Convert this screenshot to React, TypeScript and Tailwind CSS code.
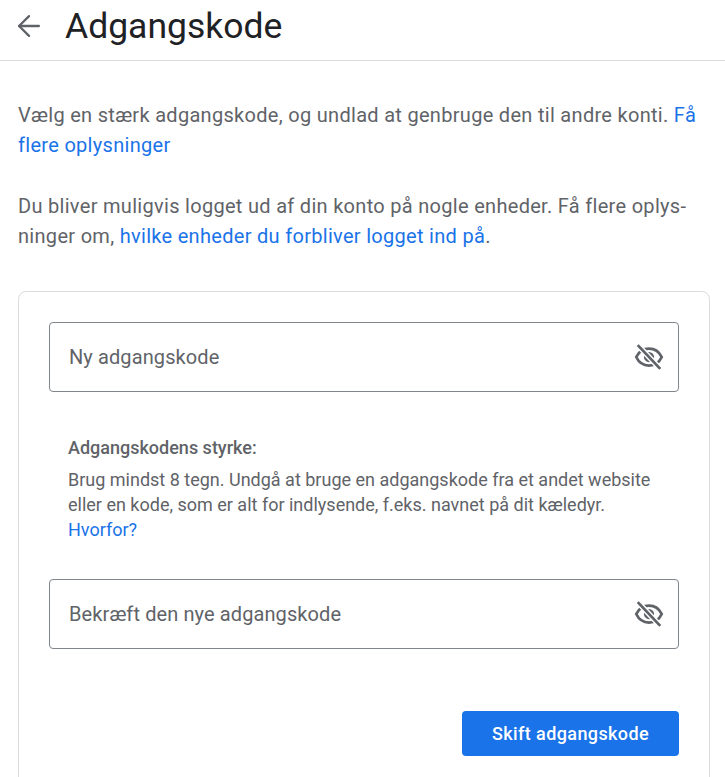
import React from 'react';
import { ArrowLeft } from 'lucide-react';

const EyeOff = () => (
  <svg width="30" height="30" viewBox="0 0 24 24" fill="none" stroke="#5f6368" strokeWidth="2.2">
    <path d="M1.800 12c2-4.300 5.800-6.800 10.200-6.800s8.200 2.500 10.200 6.800c-2 4.300-5.800 6.800-10.200 6.800s-8.200-2.500-10.200-6.800z" />
    <circle cx="12" cy="12" r="3" fill="#5f6368" />
    <path d="M3 2.500l18 19" stroke="#ffffff" strokeWidth="4.500" />
    <path d="M3 2.500l18 19" />
  </svg>
);

const Field = ({ label }: { label: string }) => (
  <div className="h-[70px] border border-[#80868b] rounded-[4px] flex items-center justify-between pl-[19px] pr-[14px]">
    <span className="text-[20px] tracking-[0.1px] text-[#5f6368]">{label}</span>
    <EyeOff />
  </div>
);

export default function App() {
  return (
    <div className="h-[777px] overflow-hidden bg-white font-['Roboto',sans-serif] text-[#5f6368]">
      <header className="h-[61px] border-b border-[#dadce0] flex items-center pl-[12px] gap-[19px] pb-[6px]">
        <ArrowLeft size={34} strokeWidth={1.6} className="text-[#5f6368] -mt-[3px]" />
        <h1 className="text-[35.500px] text-[#202124]">Adgangskode</h1>
      </header>
      <main className="pl-[18px] pr-[15px] pt-[39px]">
        <p className="text-[20px] tracking-[0.3px] leading-[30px]">
          Vælg en stærk adgangskode, og undlad at genbruge den til andre konti. <a className="text-[#1a73e8]">Få flere oplysninger</a>
        </p>
        <p className="text-[20px] tracking-[0.3px] leading-[30px] mt-[31px]">
          Du bliver muligvis logget ud af din konto på nogle enheder. Få flere oplys-<br />ninger om, <a className="text-[#1a73e8]">hvilke enheder du forbliver logget ind på</a>.
        </p>
        <section className="mt-[40px] border border-[#dadce0] rounded-[8px] h-[600px] px-[30px] pt-[30px]">
          <Field label="Ny adgangskode" />
          <div className="mt-[43px] ml-[19px] text-[18px] leading-[25px] text-[#5f6368]">
            <div className="font-medium mb-[7px]">Adgangskodens styrke:</div>
            <p>Brug mindst 8 tegn. Undgå at bruge en adgangskode fra et andet website<br />eller en kode, som er alt for indlysende, f.eks. navnet på dit kæledyr.<br /><a className="text-[#1a73e8]">Hvorfor?</a></p>
          </div>
          <div className="mt-[37px]"><Field label="Bekræft den nye adgangskode" /></div>
          <div className="mt-[62px] flex justify-end">
            <button className="w-[217px] h-[45px] bg-[#1a73e8] rounded-[4px] text-white font-medium text-[18px] tracking-[0.4px]">Skift adgangskode</button>
          </div>
        </section>
      </main>
    </div>
  );
}
